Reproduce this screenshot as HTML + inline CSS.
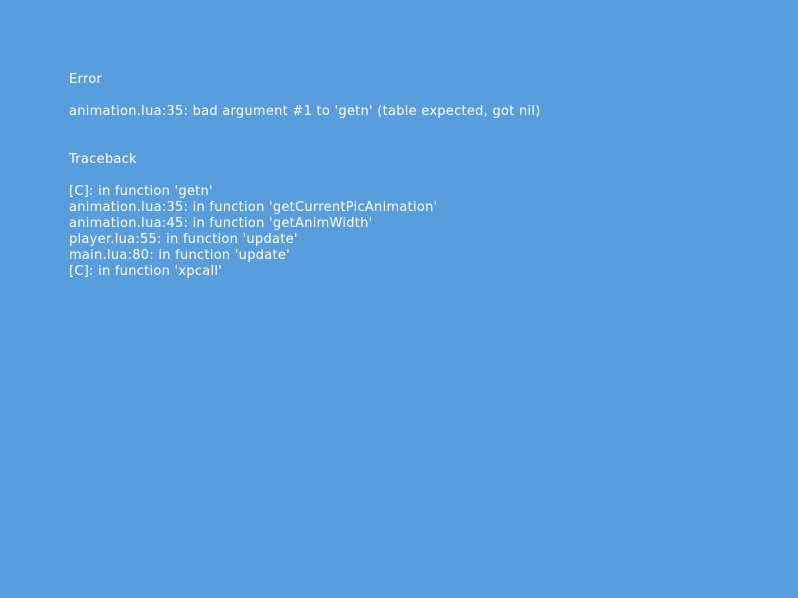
<!DOCTYPE html>
<html><head><meta charset="utf-8"><style>
html,body{margin:0;padding:0;width:798px;height:598px;background:#599ddc;overflow:hidden}
pre{position:absolute;left:69px;top:72px;margin:0;font-family:"DejaVu Sans",sans-serif;font-size:13px;letter-spacing:0.27px;line-height:16px;color:#fff;white-space:pre}
</style></head><body><pre>Error

animation.lua:35: bad argument #1 to 'getn' (table expected, got nil)


Traceback

[C]: in function 'getn'
animation.lua:35: in function 'getCurrentPicAnimation'
animation.lua:45: in function 'getAnimWidth'
player.lua:55: in function 'update'
main.lua:80: in function 'update'
[C]: in function 'xpcall'</pre></body></html>
